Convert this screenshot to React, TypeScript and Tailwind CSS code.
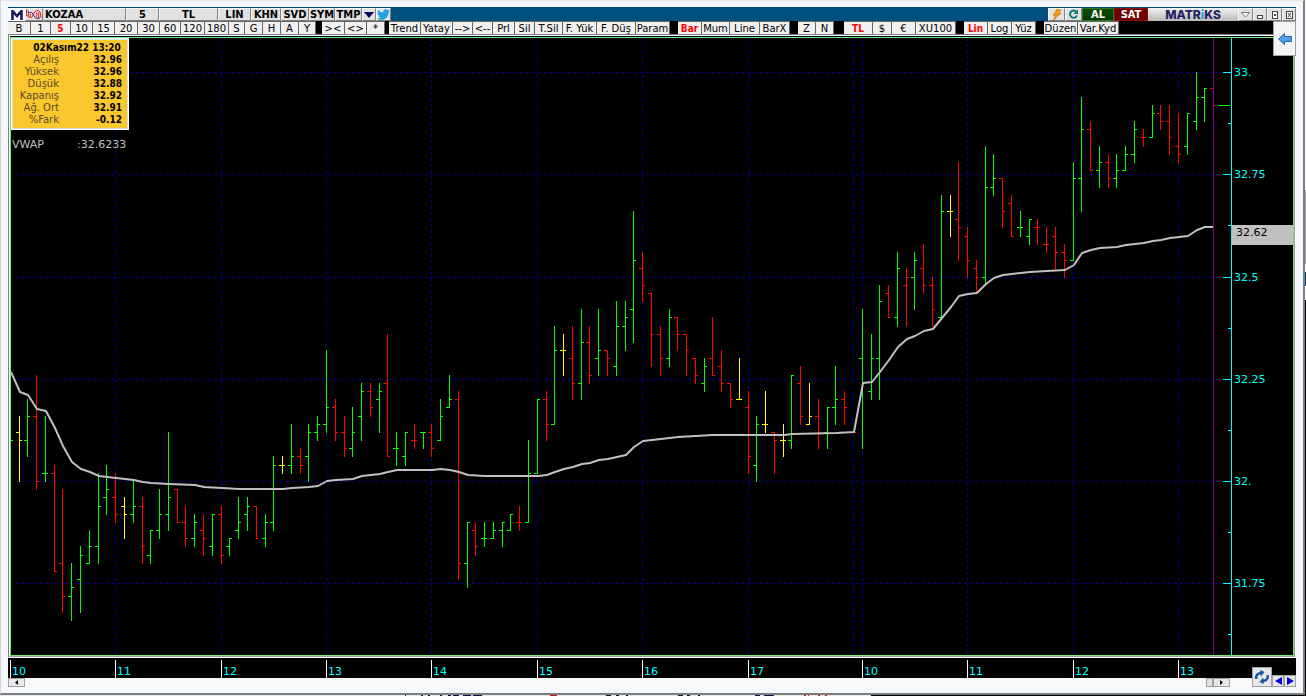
import clsx from "clsx";

// open, high, low, close in kurus, relative to 32.00
const BARS: [number, number, number, number][] = [
  // 10:00
  [10, 10, 10, 10], [12, 16, 0, 10], [10, 20, 6, 16], [16, 26, -2, 0], [2, 16, 0, 2], [2, 4, -22, -22],
  [-20, -2, -32, -28], [-28, -20, -34, -26], [-24, -16, -32, -18], [-20, -12, -20, -16], [-16, 2, -20, -6], [-4, 4, -8, -2],
  // 11:00
  [-4, 2, -10, -8], [-6, -4, -14, -8], [-8, 0, -10, -6], [-6, -4, -20, -16], [-18, -12, -20, -12], [-12, -2, -14, -8],
  [-8, 12, -12, -4], [-2, -2, -10, -10], [-10, -6, -16, -14], [-14, -8, -16, -10], [-12, -8, -18, -14], [-16, -8, -18, -8],
  // 12:00
  [-8, -6, -20, -18], [-16, -14, -18, -14], [-12, -4, -14, -10], [-8, -4, -12, -6], [-6, -6, -14, -14], [-14, -8, -16, -10],
  [-10, 6, -12, 4], [4, 6, 2, 4], [4, 14, 2, 6], [6, 8, 2, 4], [6, 14, 0, 12], [12, 16, 10, 14],
  // 13:00
  [14, 32, 12, 18], [18, 20, 10, 12], [12, 16, 6, 8], [8, 18, 6, 12], [16, 24, 10, 22], [22, 24, 16, 18],
  [20, 24, 12, 22], [24, 36, 6, 6], [8, 12, 4, 8], [6, 12, 4, 12], [10, 14, 8, 10], [12, 12, 8, 12],
  // 14:00
  [12, 14, 6, 8], [10, 20, 10, 16], [18, 26, 18, 20], [20, 22, -24, -20], [-20, -10, -26, -10], [-12, -10, -18, -16],
  [-14, -10, -16, -14], [-14, -10, -14, -12], [-12, -10, -16, -10], [-12, -8, -12, -8], [-10, -6, -12, -10], [-10, 10, -10, 2],
  // 15:00
  [2, 20, 2, 20], [20, 22, 10, 14], [14, 38, 14, 32], [32, 36, 26, 32], [30, 38, 20, 24], [24, 42, 20, 34],
  [34, 38, 24, 26], [30, 42, 26, 32], [32, 32, 26, 30], [28, 44, 26, 38], [38, 44, 32, 40], [42, 66, 34, 54],
  // 16:00
  [52, 56, 44, 48], [46, 46, 28, 36], [36, 38, 26, 30], [30, 42, 28, 40], [40, 40, 32, 36], [36, 36, 26, 32],
  [30, 30, 24, 26], [24, 30, 22, 28], [30, 40, 26, 26], [28, 32, 22, 24], [24, 24, 18, 20], [20, 30, 20, 20],
  // 17:00
  [18, 22, 2, 6], [4, 16, 0, 14], [14, 22, 12, 14], [12, 12, 2, 10], [10, 14, 6, 10], [10, 26, 8, 26],
  [24, 28, 14, 16], [14, 24, 14, 16], [16, 20, 8, 12], [12, 18, 8, 18], [18, 28, 14, 20], [20, 22, 14, 18],
  [12, 12, 12, 12],
  // 10:00
  [30, 42, 8, 24], [22, 36, 20, 30], [30, 48, 20, 44], [46, 48, 40, 40], [40, 56, 38, 52], [48, 52, 38, 50],
  [50, 56, 42, 54], [52, 58, 46, 48], [48, 50, 38, 42], [40, 70, 40, 66], [66, 70, 60, 66], [64, 78, 54, 62],
  // 11:00
  [60, 62, 50, 54], [52, 54, 46, 50], [50, 82, 48, 72], [72, 80, 70, 74], [74, 74, 62, 66], [68, 70, 60, 60],
  [62, 66, 60, 62], [60, 64, 58, 64], [62, 64, 58, 62], [58, 62, 56, 58], [60, 62, 52, 56], [56, 58, 50, 54],
  // 12:00
  [54, 78, 54, 74], [74, 94, 66, 86], [86, 88, 76, 76], [76, 82, 72, 78], [78, 80, 72, 74], [74, 80, 72, 76],
  [76, 82, 76, 80], [80, 88, 78, 86], [84, 86, 82, 84], [84, 92, 84, 90], [90, 92, 86, 88], [88, 92, 80, 84],
  // 13:00
  [82, 90, 78, 80], [82, 90, 80, 90], [88, 100, 86, 94], [94, 96, 88, 96], [96, 96, 88, 92],
];

// bar index, y
const VWAP: [number, number][] = [
  [0, 371], [1, 391], [2, 394], [3, 408], [4, 410], [5, 427], [6, 445], [7, 461], [8, 468], [9, 471], [10, 475],
  [12, 477], [14, 479], [15, 481], [16, 482], [18, 483], [21, 484], [22, 486], [24, 487], [26, 488], [31, 488],
  [32, 487], [34, 486], [35, 485], [36, 480], [37, 479], [39, 478], [40, 475], [42, 473], [43, 471], [44, 469],
  [48, 469], [49, 468], [50, 469], [51, 471], [52, 474], [54, 475], [60, 475], [61, 474], [62, 471], [63, 468],
  [64, 466], [65, 463], [66, 462], [67, 459], [68, 458], [69, 456], [70, 454], [71, 446], [72, 440], [74, 438],
  [76, 436], [80, 434], [88, 434], [89, 433], [94, 432], [96, 431], [97, 382], [98, 381], [99, 371], [100, 359],
  [101, 346], [102, 338], [103, 335], [104, 330], [105, 328], [106, 317], [107, 306], [108, 295], [109, 293],
  [110, 292], [111, 283], [112, 277], [113, 274], [114, 273], [116, 271], [118, 270], [120, 269], [121, 264],
  [122, 252], [123, 249], [124, 247], [126, 246], [127, 244], [129, 242], [130, 240], [131, 239], [132, 237],
  [134, 235], [135, 229], [136, 226], [137, 226],
];

const HOURS = [
  { bar: 0, label: "10" },
  { bar: 12, label: "11" },
  { bar: 24, label: "12" },
  { bar: 36, label: "13" },
  { bar: 48, label: "14" },
  { bar: 60, label: "15" },
  { bar: 72, label: "16" },
  { bar: 84, label: "17" },
  { bar: 97, label: "10" },
  { bar: 109, label: "11" },
  { bar: 121, label: "12" },
  { bar: 133, label: "13" },
];

const PRICES = [
  { value: 100, label: "33." },
  { value: 75, label: "32.75" },
  { value: 50, label: "32.5" },
  { value: 25, label: "32.25" },
  { value: 0, label: "32." },
  { value: -25, label: "31.75" },
];

const barX = (i: number) => Math.floor(10.3 + i * 8.783);
const priceY = (p: number) => Math.floor(72.5 + (100 - p) * 4.09);

const TITLE_BUTTONS = [
  { label: "5", width: "w-[33px]" },
  { label: "TL", width: "w-[59px]" },
  { label: "LIN", width: "w-[33px]" },
  { label: "KHN", width: "w-[30px]" },
  { label: "SVD", width: "w-[28px]" },
  { label: "SYM", width: "w-[26px]" },
  { label: "TMP", width: "w-[27px]" },
];

const TOOL_GROUPS = [
  {
    gap: "mr-[6px]",
    items: [
      ["B", "w-[23px]"], ["1", "w-[20px]"], ["5", "w-[20px]"], ["10", "w-[22px]"], ["15", "w-[22px]"],
      ["20", "w-[23px]"], ["30", "w-[22px]"], ["60", "w-[21px]"], ["120", "w-[24px]"], ["180", "w-[24px]"],
      ["S", "w-[16px]"], ["G", "w-[18px]"], ["H", "w-[18px]"], ["A", "w-[18px]"], ["Y", "w-[17px]"],
    ],
    active: "5",
  },
  { gap: "mr-[4px]", items: [["><", "w-[23px]"], ["<>", "w-[22px]"], ["*", "w-[18px]"]] },
  {
    gap: "mr-[8px]",
    items: [
      ["Trend", "w-[32px]"], ["Yatay", "w-[32px]"], ["-->", "w-[20px]"], ["<--", "w-[20px]"], ["Prl", "w-[22px]"],
      ["Sil", "w-[20px]"], ["T.Sil", "w-[28px]"], ["F. Yük", "w-[34px]"], ["F. Düş", "w-[39px]"], ["Param", "w-[34px]"],
    ],
  },
  {
    gap: "mr-[8px]",
    items: [["Bar", "w-[24px]"], ["Mum", "w-[28px]"], ["Line", "w-[30px]"], ["BarX", "w-[30px]"]],
    active: "Bar",
  },
  { gap: "mr-[10px]", items: [["Z", "w-[18px]"], ["N", "w-[18px]"]] },
  {
    gap: "mr-[8px]",
    items: [["TL", "w-[29px]"], ["$", "w-[19px]"], ["€", "w-[24px]"], ["XU100", "w-[40px]"]],
    active: "TL",
  },
  { gap: "mr-[8px]", items: [["Lin", "w-[24px]"], ["Log", "w-[24px]"], ["Yüz", "w-[24px]"]], active: "Lin" },
  { gap: "mr-0", items: [["Düzen", "w-[34px]"], ["Var.Kyd", "w-[41px]"]] },
];

const INFO = [
  ["Açılış", "32.96"],
  ["Yüksek", "32.96"],
  ["Düşük", "32.88"],
  ["Kapanış", "32.92"],
  ["Ağ. Ort", "32.91"],
  ["%Fark", "-0.12"],
];

const titleBtn =
  "flex h-[13px] shrink-0 items-center justify-center border border-t-[#f5f5f5] border-l-[#f5f5f5] border-r-[#808080] border-b-[#808080] bg-[#e1e1e1] text-black";
const boldFont = "font-['DejaVu_Sans_Condensed','DejaVu_Sans',sans-serif] font-bold";

function TitleBar() {
  return (
    <div className="flex h-[14px] bg-[#00507f] pt-px">
      <div className="flex h-[13px] w-[17px] shrink-0 items-center justify-center bg-white">
        <svg width="12" height="10" viewBox="0 0 12 10" aria-label="Matriks">
          <path d="M1.500 10V1L6 6L10.500 1V10" fill="none" stroke="#1c1c5c" strokeWidth="2.6" />
        </svg>
      </div>
      <button aria-label="Grafik" className={clsx(titleBtn, "w-[18px]")}>
        <svg width="17" height="11" viewBox="0 0 17 11" fill="none">
          <path d="M0.500 0V6M2.500 2V7M4.500 5V9M11.500 3V9M13.500 3V9" stroke="#e81010" />
          <path d="M0 6L3 8L6 9L8 5L10 2L13 1L15 3L16 9" stroke="#e81010" />
          <path d="M1 1L4 4L6 3L8 6L10 9L12 10L15 9" stroke="#20208a" />
        </svg>
      </button>
      <input
        aria-label="Sembol"
        defaultValue="KOZAA"
        className={clsx(boldFont, "h-[13px] w-[83px] shrink-0 border border-t-[#f5f5f5] border-r-[#808080] border-b-[#808080] border-l-[#e1e1e1] bg-[#e1e1e1] pl-px text-[11px] leading-[11px] outline-none")}
      />
      {TITLE_BUTTONS.map((b) => (
        <button key={b.label} className={clsx(titleBtn, boldFont, b.width, "text-[11px] leading-[11px]")}>
          {b.label}
        </button>
      ))}
      <button aria-label="Menü" className={clsx(titleBtn, "w-[14px]")}>
        <svg width="10" height="6" viewBox="0 0 10 6">
          <path d="M0 0H10L5 6Z" fill="#000060" />
        </svg>
      </button>
      <button aria-label="Twitter" className={clsx(titleBtn, "w-[15px]")}>
        <svg width="13" height="11" viewBox="0 0 24 20">
          <path
            d="M23.9 2.6c-.9.4-1.8.6-2.8.8 1-.6 1.8-1.6 2.2-2.7-1 .6-2 1-3.1 1.2A4.9 4.9 0 0 0 11.8 6.400C7.700 6.200 4.100 4.200 1.700 1.200.4 3.400 1 6.300 3.200 7.800c-.8 0-1.600-.3-2.200-.6 0 2.300 1.600 4.400 3.900 4.900-.7.2-1.500.2-2.200.1.600 2 2.400 3.400 4.600 3.400A9.900 9.900 0 0 1 0 17.600 14 14 0 0 0 7.500 19.800c9.100 0 14.300-7.700 14-14.600 1-.7 1.800-1.600 2.400-2.600z"
            fill="#1da1e0"
          />
        </svg>
      </button>

      <div className="ml-auto flex">
        <button aria-label="Emir" className={clsx(titleBtn, "w-[17px]")}>
          <svg width="10" height="12" viewBox="0 0 10 12">
            <path d="M5 0L9 1L6.500 4H9L1 12L3.500 6.500H1Z" fill="#f59a10" stroke="#c86400" strokeWidth="0.5" />
          </svg>
        </button>
        <button aria-label="Yenile" className={clsx(titleBtn, "w-[17px]")}>
          <svg width="11" height="11" viewBox="0 0 11 11">
            <path d="M8.500 3A3.600 3.600 0 1 0 9 6.500" fill="none" stroke="#0a7f6c" strokeWidth="2" />
            <path d="M10 0.500V5H5.500Z" fill="#0a7f6c" />
          </svg>
        </button>
        <button className={clsx(boldFont, "flex h-[13px] w-[32px] items-center justify-center border border-[#2a7a1a] bg-linear-to-b from-[#0c4a06] to-[#063a02] text-[11px] leading-[11px] text-white")}>
          AL
        </button>
        <button className={clsx(boldFont, "flex h-[13px] w-[34px] items-center justify-center border border-[#8c1010] bg-[#6e0000] text-[11px] leading-[11px] text-white")}>
          SAT
        </button>
        <div className="flex h-[13px] w-[90px] items-center justify-center bg-linear-to-b from-[#f2f2f2] to-[#b9b9b9] font-['Inter',sans-serif] text-[12px] leading-[13px] font-extrabold text-[#23235f]">
          MATR<span className="text-[#2fa5d8]">i</span>KS
        </div>
        <button aria-label="Gizle" className={clsx(titleBtn, "w-[15px]")}>
          <svg width="9" height="6" viewBox="0 0 9 6"><path d="M0.500 0.500H8.500L4.500 5Z" fill="#fff" stroke="#777" /></svg>
        </button>
        <button aria-label="Küçült" className={clsx(titleBtn, "w-[14px]")}>
          <svg width="6" height="10" viewBox="0 0 6 10" shapeRendering="crispEdges">
            <rect x="0.500" y="5.500" width="5" height="3" fill="#fff" stroke="#444" />
          </svg>
        </button>
        <button aria-label="Büyüt" className={clsx(titleBtn, "w-[15px]")}>
          <svg width="6" height="8" viewBox="0 0 6 8" shapeRendering="crispEdges">
            <rect x="0.500" y="0.500" width="5" height="7" fill="#fff" stroke="#444" />
            <rect x="2" y="3" width="2" height="2" fill="#444" />
          </svg>
        </button>
        <button aria-label="Kapat" className={clsx(titleBtn, "w-[14px]")}>
          <svg width="7" height="8" viewBox="0 0 7 8">
            <rect x="0.500" y="0.500" width="6" height="7" fill="#fff" stroke="#444" />
            <path d="M2 2L5 6M5 2L2 6" stroke="#444" />
          </svg>
        </button>
      </div>
    </div>
  );
}

function ToolBar() {
  return (
    <div className="flex h-[13px] bg-black">
      {TOOL_GROUPS.map((group, g) => (
        <div key={g} className={clsx("flex shrink-0", group.gap)}>
          {group.items.map(([label, width]) => (
            <button
              key={label}
              className={clsx(
                width,
                "flex h-[13px] shrink-0 items-center justify-center overflow-hidden border-t border-r border-[#666] bg-[#f0f0f0] pt-[2px] text-[10px] leading-[12px] whitespace-nowrap",
                label === group.active ? "font-['DejaVu_Sans_Condensed','DejaVu_Sans',sans-serif] font-bold text-[#f00]" : "text-black"
              )}
            >
              {label}
            </button>
          ))}
        </div>
      ))}
    </div>
  );
}

function Plot() {
  const points = VWAP.map(([i, y]) => `${barX(i) + 1},${y + 1}`).join(" ");

  return (
    <svg className="h-[617px] min-w-0 flex-1" viewBox="11 38 1221 617" preserveAspectRatio="none" shapeRendering="crispEdges">
      {/* grid */}
      <g stroke="#000090" strokeDasharray="3 3">
        {PRICES.map((p) => (
          <path key={p.value} d={`M16 ${priceY(p.value) + 0.5}H1222`} />
        ))}
        {[12, 24, 36, 48, 60, 72, 84, 96, 97, 109, 121, 133].map((i) => (
          <path key={i} d={`M${barX(i) + 0.5} 38V654`} />
        ))}
      </g>

      {BARS.map(([o, h, l, c], i) => {
        const prev = i > 0 ? BARS[i - 1][3] : c - 1;
        const color = c > prev ? "#00ff00" : c < prev ? "#ff0000" : "#ffff00";
        const x = barX(i);
        return (
          <g key={i} fill={color}>
            <rect x={x} y={priceY(h)} width="1" height={priceY(l) - priceY(h) + 1} />
            <rect x={x - 3} y={priceY(o)} width="3" height="1" />
            <rect x={x + 1} y={priceY(c)} width="2" height="1" />
          </g>
        );
      })}

      <polyline
        points={points}
        fill="none"
        stroke="#c0c0c0"
        strokeWidth="2"
        strokeLinejoin="round"
        shapeRendering="geometricPrecision"
      />

      {/* cursor and last price */}
      <path d="M1213.500 38V655" stroke="#800080" />
      <path d="M1218 105.500H1230" stroke="#00ff00" />

      <g stroke="#00ffff">
        <path d="M1231.500 38V655" />
        {PRICES.map((p) => (
          <path key={p.value} d={`M1223 ${priceY(p.value) + 0.5}H1231M1228 ${priceY(p.value - 12.5) + 0.5}H1231`} />
        ))}
      </g>
    </svg>
  );
}

function PriceAxis() {
  return (
    <svg className="h-[617px] w-[61px] shrink-0" viewBox="1232 38 61 617" fontSize="11">
      {PRICES.map((p) => (
        <text key={p.value} x="1234" y={priceY(p.value) + 4} fill="#00ffff">
          {p.label}
        </text>
      ))}
      <rect x="1232" y="225" width="61" height="20" fill="#c0c0c0" />
      <text x="1236" y="236" fill="#000">32.62</text>
    </svg>
  );
}

function InfoPanel() {
  return (
    <div className="absolute top-0 left-0">
      <div className="w-[118px] border border-white bg-white">
        <div className="border border-[#ddd] bg-[#fac82d] pt-[2px] pr-[5px] pb-[2px] pl-[3px] text-[10px] leading-[12px]">
          <div className={clsx(boldFont, "pl-[16px] text-center whitespace-nowrap")}>02Kasım22 13:20</div>
          <dl>
            {INFO.map(([label, value]) => (
              <div key={label} className="flex">
                <dt className="w-[43px] text-right whitespace-nowrap text-[#5a4a2a]">{label}</dt>
                <dd className={clsx(boldFont, "flex-1 text-right")}>{value}</dd>
              </div>
            ))}
          </dl>
        </div>
      </div>
      <div className="mt-[8px] flex pl-px text-[11px] leading-[14px] text-[#c0c0c0]">
        <span className="w-[65px]">VWAP</span>
        <span>:32.6233</span>
      </div>
    </div>
  );
}

function TimeAxis() {
  return (
    <svg className="block h-[20px] w-full bg-black" fontSize="11">
      {HOURS.map(({ bar, label }) => {
        const left = `${((barX(bar) - 8) / 1288) * 100}%`;
        return (
          <g key={bar}>
            <rect x={left} y="2" width="1" height="18" fill="#fff" shapeRendering="crispEdges" />
            <text x={left} dx="2" y="17" fill="#00ffff">{label}</text>
          </g>
        );
      })}
    </svg>
  );
}

const grayBtn = "flex shrink-0 items-center justify-center border border-[#a0a0a0] bg-[#e8e8e8]";

function Footer() {
  return (
    <div className="relative">
      <TimeAxis />
      <div className="flex h-[9px] bg-[#f9f9f9]">
        <button aria-label="Geri kaydır" className={clsx(grayBtn, "w-[17px]")}>
          <svg width="3" height="5" viewBox="0 0 3 5"><path d="M3 0V5L0 2.500Z" fill="#000" /></svg>
        </button>
        <div className="flex-1" />
        <div className="w-[7px] border border-[#a0a0a0] bg-[#e0e0e0]" />
        <button aria-label="İleri kaydır" className={clsx(grayBtn, "mr-[66px] w-[17px]")}>
          <svg width="3" height="5" viewBox="0 0 3 5"><path d="M0 0V5L3 2.500Z" fill="#000" /></svg>
        </button>
      </div>
      <div className="absolute right-0 bottom-0 flex items-end">
        <button aria-label="Güncelle" className={clsx(grayBtn, "h-[20px] w-[20px]")}>
          <svg width="16" height="16" viewBox="0 0 16 16" fill="#1d5a9e">
            <path d="M1 10C0.500 6 3 3 6 3L6.500 1L10.500 3L7 7.500L6.500 5.500C4.500 5.500 3 7 3.500 10Z" />
            <path d="M15 6C15.500 10 13 13 10 13L9.500 15L5.500 13L9 8.500L9.500 10.500C11.500 10.500 13 9 12.500 6Z" />
          </svg>
        </button>
        <button aria-label="Önceki" className={clsx(grayBtn, "h-[12px] w-[12px]")}>
          <svg width="7" height="8" viewBox="0 0 7 8"><path d="M7 0V8L0 4Z" fill="#0000d8" /></svg>
        </button>
        <button aria-label="Sonraki" className={clsx(grayBtn, "h-[12px] w-[12px]")}>
          <svg width="7" height="8" viewBox="0 0 7 8"><path d="M0 0V8L7 4Z" fill="#0000d8" /></svg>
        </button>
      </div>
    </div>
  );
}

export default function App() {
  return (
    <div className="flex min-h-screen flex-col bg-black font-['DejaVu_Sans',sans-serif]">
      <div className="flex">
        <div className="min-w-0 flex-1 border-r-2 border-b-2 border-l border-t border-t-[#e4e4e4] border-r-[#7d7d7d] border-b-[#7d7d7d] border-l-[#d4d4d4] bg-[#f4f7fc] pt-[6px] pr-[7px] pb-[6px] pl-[7px]">
          <div className="relative">
            <TitleBar />
            <ToolBar />
            <div className="border border-t-[#808080] border-r-white border-b-white border-l-[#808080] bg-black">
              <div className="border border-t-white border-r-[#a0a0a0] border-b-[#a0a0a0] border-l-white pt-px">
                <div className="relative flex border border-[#6ee86e]">
                  <Plot />
                  <PriceAxis />
                  <InfoPanel />
                </div>
              </div>
            </div>
            <Footer />
            <button
              aria-label="Geri"
              className="absolute top-[14px] right-0 flex h-[35px] w-[23px] items-center justify-center border border-[#a0a0a0] bg-[#f5f5f5]"
            >
              <svg width="14" height="12" viewBox="0 0 14 12">
                <path d="M0.500 6L6.500 0.500V3.500H13.500V8.500H6.500V11.500Z" fill="#4f9fe8" stroke="#2464b4" />
              </svg>
            </button>
          </div>
        </div>
        {/* edge of the window behind */}
        <div className="flex w-px flex-col">
          <div className="h-[190px] bg-white" />
          <div className="h-[74px] bg-[#a8a8a8]" />
          <div className="h-[8px] bg-white" />
          <div className="h-[14px] bg-[#003c78]" />
          <div className="h-[14px] bg-white" />
        </div>
      </div>
      <div className="h-px w-2/3 bg-[#e8e8e8]">
        <svg className="block" width="866" height="1" shapeRendering="crispEdges">
          <path d="M405 0.500h1M421 0.500h2M428 0.500h2M440 0.500h2M448 0.500h3M453 0.500h6M463 0.500h8M473 0.500h9M606 0.500h5M616 0.500h3M626 0.500h2M678 0.500h5M687 0.500h3M698 0.500h2M755 0.500h5M764 0.500h10" stroke="#101050" />
          <path d="M550 0.500h7M804 0.500h2M808 0.500h1M818 0.500h2M825 0.500h2" stroke="#d01010" />
        </svg>
      </div>
    </div>
  );
}
